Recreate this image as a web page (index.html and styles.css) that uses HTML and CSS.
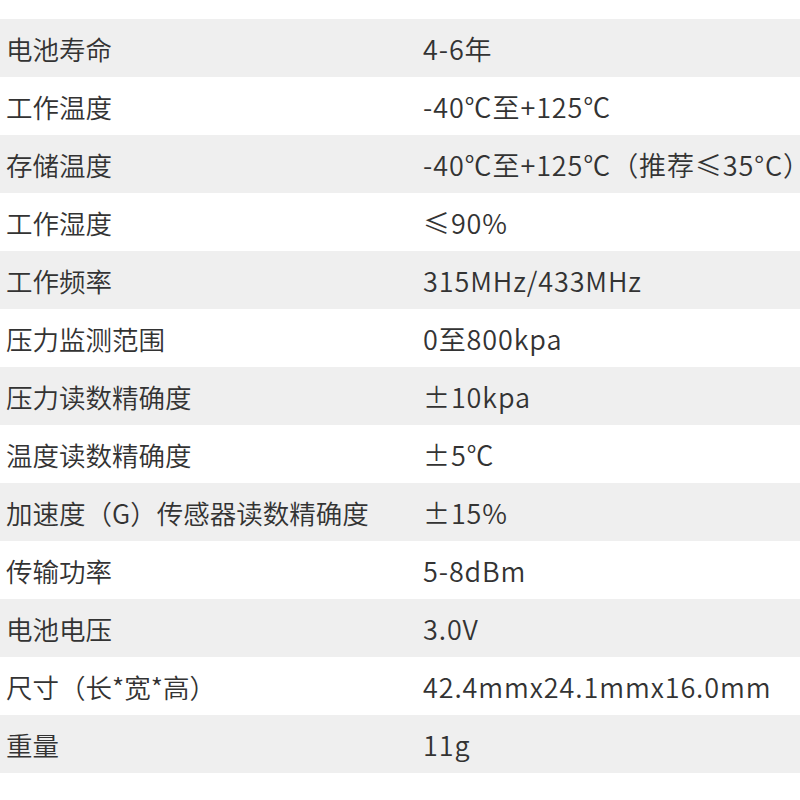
FILE: index.html
```html
<!DOCTYPE html>
<html lang="zh-CN">
<head>
<meta charset="utf-8">
<title>参数</title>
<link rel="stylesheet" href="styles.css">
</head>
<body>
<div class="spec">
  <div class="row"><div class="k">电池寿命</div><div class="v">4-6年</div></div>
  <div class="row"><div class="k">工作温度</div><div class="v">-40℃至+125℃</div></div>
  <div class="row"><div class="k">存储温度</div><div class="v">-40℃至+125℃（推荐≤35°C）</div></div>
  <div class="row"><div class="k">工作湿度</div><div class="v">≤90%</div></div>
  <div class="row"><div class="k">工作频率</div><div class="v">315MHz/433MHz</div></div>
  <div class="row"><div class="k">压力监测范围</div><div class="v">0至800kpa</div></div>
  <div class="row"><div class="k">压力读数精确度</div><div class="v">±10kpa</div></div>
  <div class="row"><div class="k">温度读数精确度</div><div class="v">±5℃</div></div>
  <div class="row"><div class="k">加速度（G）传感器读数精确度</div><div class="v">±15%</div></div>
  <div class="row"><div class="k">传输功率</div><div class="v">5-8dBm</div></div>
  <div class="row"><div class="k">电池电压</div><div class="v">3.0V</div></div>
  <div class="row"><div class="k">尺寸（长*宽*高）</div><div class="v">42.4mmx24.1mmx16.0mm</div></div>
  <div class="row"><div class="k">重量</div><div class="v">11g</div></div>
</div>
</body>
</html>
```

FILE: styles.css
```css
html, body {
  margin: 0;
  padding: 0;
  background: #ffffff;
}
body {
  font-family: "Noto Sans CJK SC", "Noto Sans", sans-serif;
  color: #333333;
  font-size: 27px;
  font-weight: 350;
}
.spec {
  padding-top: 19px;
}
.row {
  display: grid;
  grid-template-columns: 423px 1fr;
  height: 58px;
  align-items: center;
}
.row:nth-child(odd) {
  background: #efefef;
}
.k {
  padding-left: 6px;
  white-space: nowrap;
  font-size: 26.5px;
}
.v {
  white-space: nowrap;
  letter-spacing: 0.9px;
}
```
